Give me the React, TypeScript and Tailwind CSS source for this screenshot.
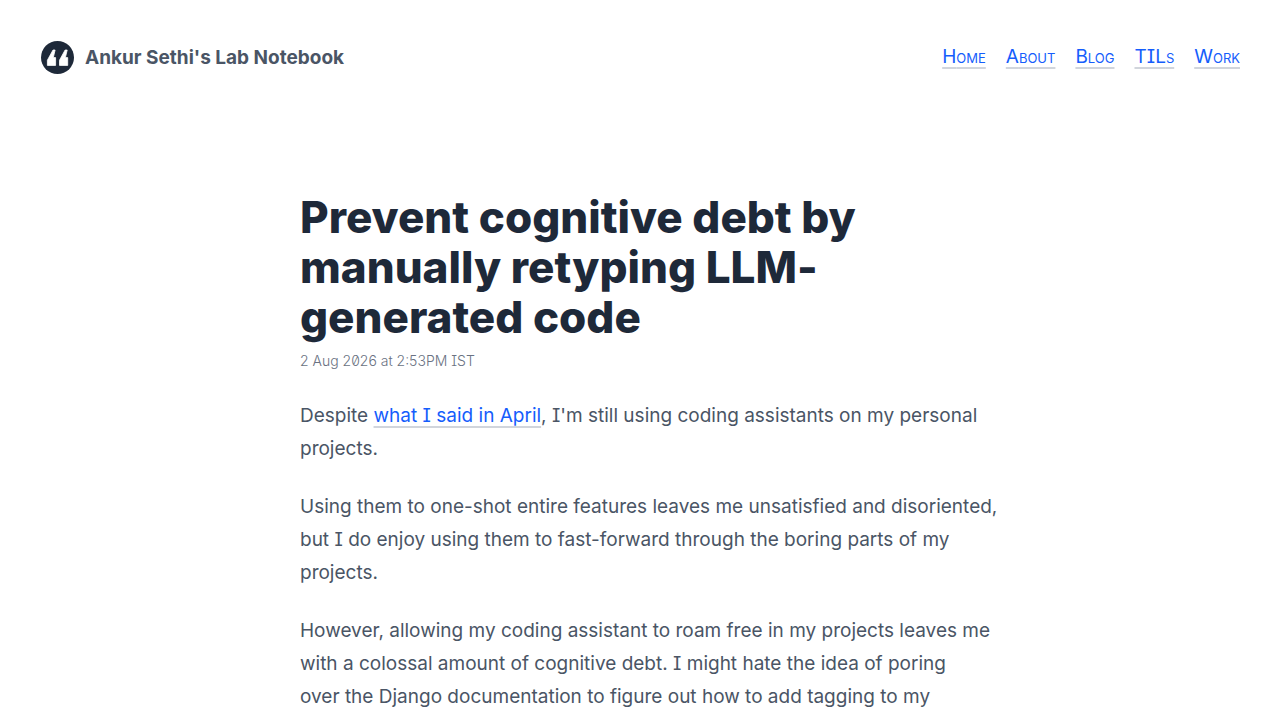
import React from 'react';

const navItems = [
  { initial: 'H', rest: 'ome', href: '#home' },
  { initial: 'A', rest: 'bout', href: '#about' },
  { initial: 'B', rest: 'log', href: '#blog' },
  { initial: 'TIL', rest: 's', href: '#tils' },
  { initial: 'W', rest: 'ork', href: '#work' },
];

const linkStyle =
  'text-blue-600 underline decoration-2 decoration-gray-300 underline-offset-4 [text-decoration-skip-ink:none]';

function QuoteLogo() {
  return (
    <svg viewBox="0 0 33 33" className="w-[33px] h-[33px] shrink-0" aria-hidden="true">
      <circle cx="16.5" cy="16.5" r="16.5" fill="#1e2939" />
      <g fill="#fff" stroke="#fff" strokeWidth="0.8" strokeLinejoin="round">
        <path d="M12 9h2.1l-1.8 7.6h2.3v7.8H6.4v-5.2z" />
        <path d="M24.1 9h2.1l-1.8 7.6h2.3v7.8h-8.2v-5.2z" />
      </g>
    </svg>
  );
}

export default function App() {
  return (
    <div className="bg-white text-gray-600 text-[19px] leading-[33px] font-['Inter','Liberation_Sans',sans-serif] [font-feature-settings:'cv08','zero']">
      <header className="flex items-center justify-between px-10 pt-[41px]">
        <div className="flex items-center gap-[11px] pl-px">
          <QuoteLogo />
          <span className="font-bold">Ankur Sethi's Lab Notebook</span>
        </div>
        <nav className="flex gap-5 leading-7">
          {navItems.map((item) => (
            <a key={item.href} href={item.href} className={linkStyle}>
              {item.initial}
              <span className="text-[13px] uppercase">{item.rest}</span>
            </a>
          ))}
        </nav>
      </header>

      <main className="max-w-[680px] mx-auto pt-[118px]">
        <h1 className="text-[44px] leading-[50px] font-extrabold text-gray-800">
          Prevent cognitive debt by manually retyping LLM-generated code
        </h1>
        <time dateTime="2026-08-02T14:53+05:30" className="block mt-[3px] text-[14px] leading-8 font-light text-gray-500">
          2 Aug 2026 at 2:53PM IST
        </time>
        <div className="mt-[22px] -mr-6 space-y-[25px]">
          <p>
            Despite <a href="#april" className={linkStyle}>what I said in April</a>, I'm still using
            coding assistants on my personal projects.
          </p>
          <p>
            Using them to one-shot entire features leaves me unsatisfied and disoriented,
            <br />
            but I do enjoy using them to fast-forward through the boring parts of my projects.
          </p>
          <p>
            However, allowing my coding assistant to roam free in my projects leaves me
            <br />
            with a colossal amount of cognitive debt. I might hate the idea of poring
            <br />
            over the Django documentation to figure out how to add tagging to my
          </p>
        </div>
      </main>
    </div>
  );
}
